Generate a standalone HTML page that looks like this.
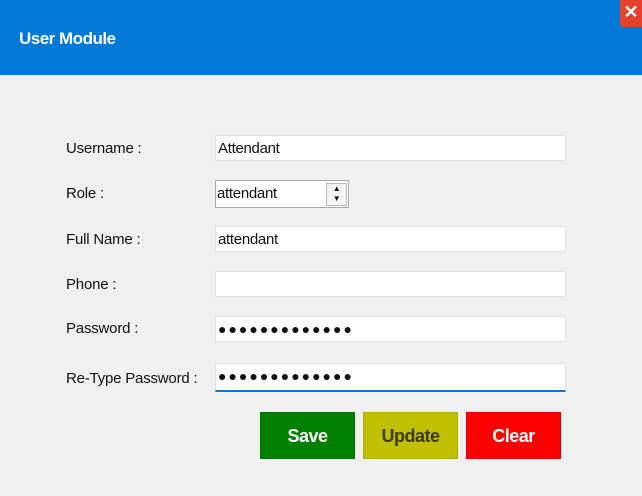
<html><head><style>
body{margin:0;width:642px;height:496px;background:#f0f0f0;font-family:"Liberation Sans",sans-serif;position:relative;overflow:hidden}
.hd{position:absolute;left:0;top:0;width:642px;height:75px;background:#0078d7}
.ttl{position:absolute;left:19px;top:29px;color:#fff;font-weight:bold;font-size:17px;letter-spacing:-0.5px}
.x{position:absolute;left:620px;top:0;width:22px;height:27px;background:#e8402f;border-radius:0 0 0 3px;color:#fff;font-weight:bold;font-size:18px;text-align:center;line-height:24px}
.l{position:absolute;left:66px;font-size:15px;color:#111;letter-spacing:-0.2px}
.f{position:absolute;left:215px;width:351px;height:26px;background:#fff;border:1px solid #e3e3e3;box-sizing:border-box;font-size:15px;padding:4px 2px;color:#111;letter-spacing:-0.3px}
.d{letter-spacing:2px;font-size:14px;padding-top:4px}
.b{position:absolute;top:412px;width:95px;height:47px;color:#fff;font-weight:bold;font-size:18px;text-align:center;line-height:47px;box-sizing:border-box;border:1px solid rgba(0,0,0,.1);letter-spacing:-0.5px}
</style></head><body>
<div class="hd"><div class="ttl">User Module</div></div>
<div class="x">✕</div>
<div class="l" style="top:140px">Username :</div>
<div class="f" style="top:135px">Attendant</div>
<div class="l" style="top:185px">Role :</div>
<div class="f" style="top:180px;width:134px;height:28px;border:1px solid #aaa;padding:4px 1px">attendant
<div style="position:absolute;left:110px;top:2px;width:19px;height:21px;border:1px solid #bbb;background:#f4f4f4;font-size:8px;line-height:10px;text-align:center">▲<br>▼</div></div>
<div class="l" style="top:231px">Full Name :</div>
<div class="f" style="top:226px">attendant</div>
<div class="l" style="top:276px">Phone :</div>
<div class="f" style="top:271px"></div>
<div class="l" style="top:320px">Password :</div>
<div class="f d" style="top:316px">●●●●●●●●●●●●●</div>
<div class="l" style="top:370px">Re-Type Password :</div>
<div class="f d" style="top:363px;height:29px;border-bottom:2px solid #0078d7">●●●●●●●●●●●●●</div>
<div class="b" style="left:260px;background:#008000">Save</div>
<div class="b" style="left:363px;background:#c0c000;color:#3a3a00">Update</div>
<div class="b" style="left:466px;background:#ff0000">Clear</div>
</body></html>
